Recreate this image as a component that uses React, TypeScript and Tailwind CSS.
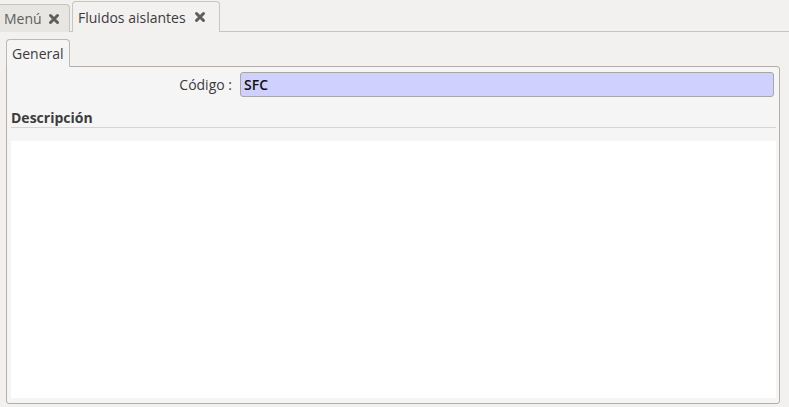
import React from "react";

function CloseX() {
  return (
    <svg width="12" height="12" viewBox="0 0 12 12" className="shrink-0">
      <path d="M2.5 2.5 L9.5 9.5 M9.5 2.5 L2.5 9.5" stroke="#5e5e5e" strokeWidth="3" strokeLinecap="round" />
    </svg>
  );
}

export default function App() {
  return (
    <div className="w-[789px] h-[407px] bg-[#f2f1f0] flex flex-col overflow-hidden text-[#3c3c3c]" style={{ fontFamily: "'Open Sans', 'DejaVu Sans', sans-serif" }}>
      {/* Top tab bar */}
      <div className="h-[32px] flex items-end relative">
        <div className="absolute left-0 right-0 bottom-0 h-px bg-[#c8c4bf]" />
        <div className="relative h-[28px] w-[70px] flex items-center gap-[6px] pl-[4px] bg-[#e8e6e3] border border-b-0 border-[#c8c4bf] rounded-tr-[4px] border-l-0 text-[#5e5e5e] text-[14px]">
          <span>Menú</span>
          <CloseX />
        </div>
        <div className="relative ml-[2px] h-[31px] w-[148px] flex items-center gap-[8px] pl-[5px] bg-[#f2f1f0] border border-b-0 border-[#c8c4bf] rounded-t-[4px] text-[14px] text-[#3c3c3c]">
          <span>Fluidos aislantes</span>
          <CloseX />
        </div>
      </div>

      {/* Content */}
      <div className="flex-1 flex flex-col pl-[6px] pr-[9px] pt-[6px] pb-[3px]">
        <div className="flex">
          <div className="h-[28px] w-[64px] flex items-center pl-[5px] bg-[#f5f5f5] border border-b-0 border-[#bdb9b3] rounded-t-[4px] text-[14px] text-[#3c3c3c] relative top-px z-10">
            General
          </div>
        </div>
        <div className="flex-1 bg-[#f5f5f5] border border-[#b3afa8] rounded-b-[3px] rounded-tr-[3px] flex flex-col pl-[4px] pr-[3px] pt-[5px] pb-[5px]">
          <div className="flex items-center h-[25px]">
            <div className="w-[223px] text-right text-[14px] pr-[2px]">Código :</div>
            <div className="ml-[6px] flex-1 h-[25px] bg-[#d0d0fe] border border-[#aaa7a2] rounded-[3px] flex items-center pl-[3px] text-[14px] font-semibold text-[#101010]">
              SFC
            </div>
            <div className="w-[2px]" />
          </div>
          <div className="mt-[13px] text-[14px] font-bold text-[#3c3c3c] leading-[16px]">Descripción</div>
          <div className="h-px bg-[#d6d4d1] mt-[1px]" />
          <div className="mt-[13px] flex-1 bg-white" />
        </div>
      </div>
    </div>
  );
}
